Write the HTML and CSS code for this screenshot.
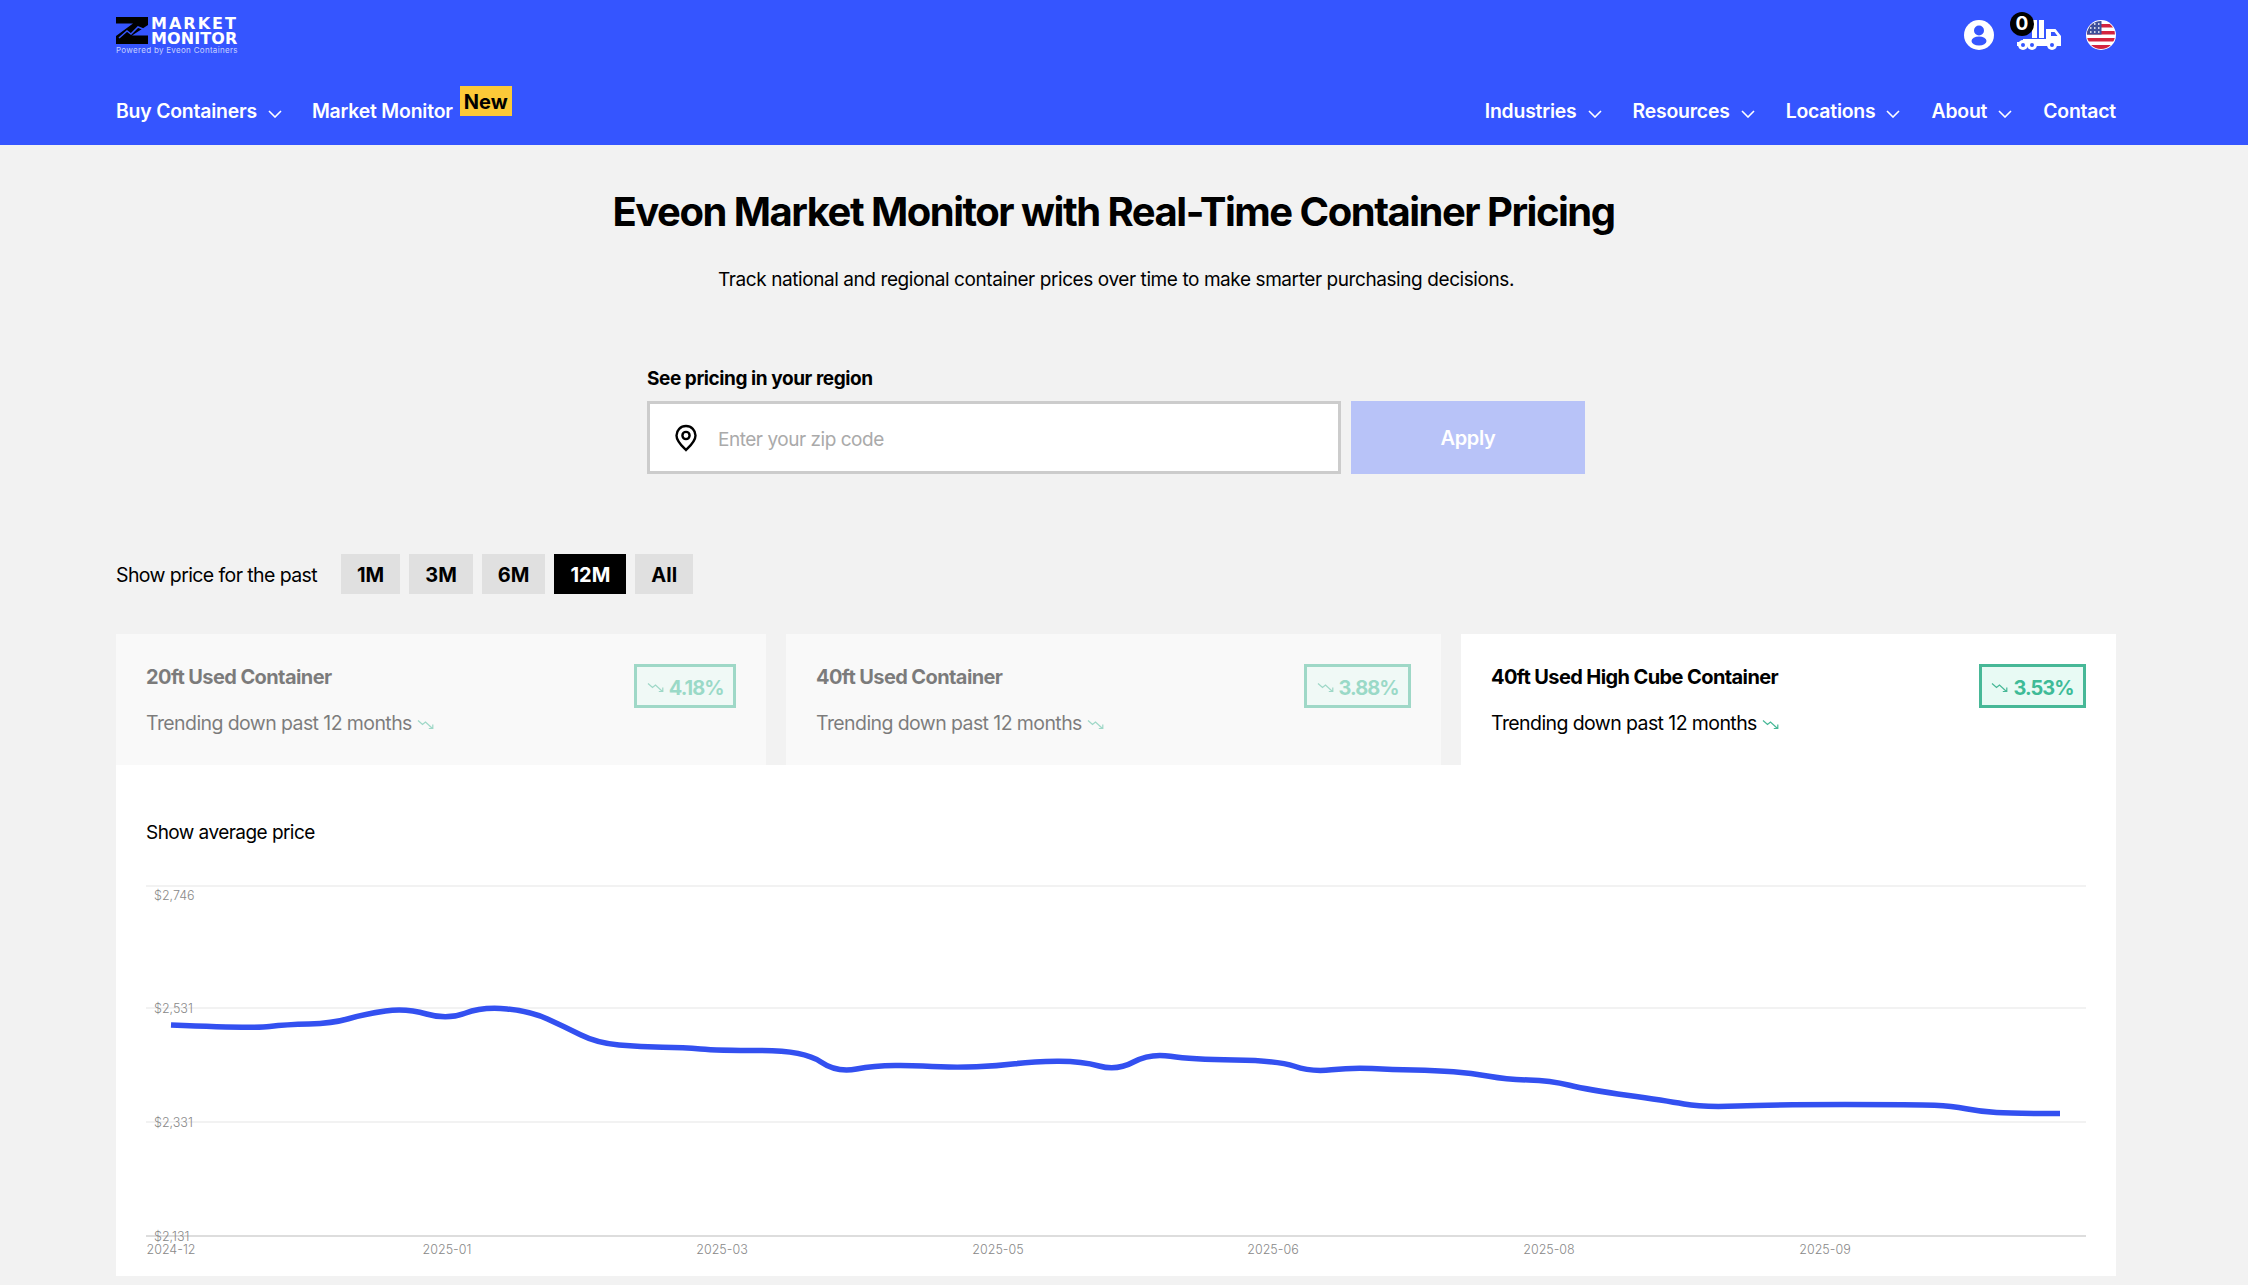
FILE: index.html
```html
<!DOCTYPE html>
<html lang="en">
<head>
  <meta charset="UTF-8">
  <meta name="viewport" content="width=device-width, initial-scale=1.0">
  <title>Eveon Market Monitor</title>
  <link rel="stylesheet" href="styles.css">
</head>
<body>
  <svg class="defs" width="0" height="0" aria-hidden="true">
    <symbol id="chevron" viewBox="0 0 14 8">
      <path d="M1 1l6 6 6-6" fill="none" stroke="currentColor" stroke-width="1.6"/>
    </symbol>
    <symbol id="trend" viewBox="0 0 18 11">
      <path d="M1 1.500l4.500 4 3-2.500 7 6.500M15.800 5.500v4h-4" fill="none" stroke="currentColor" stroke-width="1.200"/>
    </symbol>
  </svg>

  <header class="site-header">
    <div class="container">
      <div class="top-row">
        <a class="logo">
          <svg class="logo-mark" viewBox="0 0 32 27">
            <path d="M0 0H32V8L16 18.500H32V27H0V19L17 6.500H0Z" fill="#000"/>
            <path d="M3 21l8-7 4 3 7-7 5 2" fill="none" stroke="#3555ff" stroke-width="1.500"/>
          </svg>
          <span class="logo-name"><span class="logo-line-a">MARKET</span><span class="logo-line-b">MONITOR</span></span>
          <span class="logo-sub">Powered by Eveon Containers</span>
        </a>
        <div class="top-icons">
          <svg class="icon-user" viewBox="0 0 30 30">
            <circle cx="15" cy="15" r="15" fill="#fff"/>
            <circle cx="15" cy="10.500" r="5" fill="#3555ff"/>
            <ellipse cx="15" cy="21" rx="7.500" ry="4.500" fill="#3555ff"/>
          </svg>
          <div class="cart">
            <svg class="icon-truck" viewBox="0 0 44 30">
              <path d="M15 0h5v18h-5zM22 0h5v18h-5z" fill="#fff"/>
              <path d="M6 19h23V9h9.500l5.500 7v10H0v-4h6z" fill="#fff"/>
              <circle cx="6" cy="25" r="5" fill="#fff"/><circle cx="6" cy="25" r="2" fill="#3555ff"/>
              <circle cx="15" cy="25" r="5" fill="#fff"/><circle cx="15" cy="25" r="2" fill="#3555ff"/>
              <circle cx="35" cy="25" r="5" fill="#fff"/><circle cx="35" cy="25" r="2" fill="#3555ff"/>
              <path d="M34 12h3.500l3 4H34z" fill="#3555ff"/>
            </svg>
            <span class="cart-count">0</span>
          </div>
          <svg class="icon-flag" viewBox="0 0 30 30">
            <clipPath id="flag-clip"><circle cx="15" cy="15" r="14"/></clipPath>
            <circle cx="15" cy="15" r="15" fill="#fff"/>
            <g clip-path="url(#flag-clip)">
              <path d="M0 0h30v30H0z" fill="#fff"/>
              <path d="M0 4h30v3.500H0zM0 11h30v3.500H0zM0 18h30v3.500H0zM0 25h30v5H0z" fill="#d3233f"/>
              <path d="M0 0h15.500v14.500H0z" fill="#3d4f9a"/>
              <path d="M4 4h1.500M8 4h1.500M12 4h1.500M4 8h1.500M8 8h1.500M12 8h1.500M4 12h1.500M8 12h1.500M12 12h1.500" stroke="#fff" stroke-width="1.500"/>
            </g>
          </svg>
        </div>
      </div>
      <nav class="main-nav">
        <div class="nav-group">
          <a class="nav-item">Buy Containers <svg class="chevron"><use href="#chevron"/></svg></a>
          <a class="nav-item nav-market">Market Monitor</a>
          <span class="new-tag">New</span>
        </div>
        <div class="nav-group nav-right">
          <a class="nav-item">Industries <svg class="chevron"><use href="#chevron"/></svg></a>
          <a class="nav-item">Resources <svg class="chevron"><use href="#chevron"/></svg></a>
          <a class="nav-item">Locations <svg class="chevron"><use href="#chevron"/></svg></a>
          <a class="nav-item">About <svg class="chevron"><use href="#chevron"/></svg></a>
          <a class="nav-item">Contact</a>
        </div>
      </nav>
    </div>
  </header>

  <main class="container">
    <h1 class="page-title">Eveon Market Monitor with Real-Time Container Pricing</h1>
    <p class="page-sub">Track national and regional container prices over time to make smarter purchasing decisions.</p>

    <form class="region">
      <label class="region-label">See pricing in your region</label>
      <div class="region-row">
        <div class="zip-box">
          <svg class="pin" viewBox="0 0 24 28">
            <path d="M12 2C6.500 2 2.500 6.300 2.500 11.500 2.500 17.500 8.500 22.500 12 26c3.500-3.500 9.500-8.500 9.500-14.500C21.500 6.300 17.500 2 12 2z" fill="none" stroke="#000" stroke-width="2.400"/>
            <circle cx="12" cy="11.500" r="3.600" fill="none" stroke="#000" stroke-width="2.400"/>
          </svg>
          <span class="zip-placeholder">Enter your zip code</span>
        </div>
        <button class="apply" type="button">Apply</button>
      </div>
    </form>

    <div class="range">
      <span class="range-label">Show price for the past</span>
      <button class="range-btn" type="button">1M</button>
      <button class="range-btn" type="button">3M</button>
      <button class="range-btn" type="button">6M</button>
      <button class="range-btn active" type="button">12M</button>
      <button class="range-btn" type="button">All</button>
    </div>

    <div class="tabs">
      <div class="tab">
        <div class="tab-inner">
          <div>
            <div class="tab-title">20ft Used Container</div>
            <div class="tab-trend">Trending down past 12 months <svg class="trend"><use href="#trend"/></svg></div>
          </div>
          <div class="change"><svg class="trend"><use href="#trend"/></svg>4.18%</div>
        </div>
      </div>
      <div class="tab">
        <div class="tab-inner">
          <div>
            <div class="tab-title">40ft Used Container</div>
            <div class="tab-trend">Trending down past 12 months <svg class="trend"><use href="#trend"/></svg></div>
          </div>
          <div class="change"><svg class="trend"><use href="#trend"/></svg>3.88%</div>
        </div>
      </div>
      <div class="tab selected">
        <div class="tab-inner">
          <div>
            <div class="tab-title">40ft Used High Cube Container</div>
            <div class="tab-trend">Trending down past 12 months <svg class="trend"><use href="#trend"/></svg></div>
          </div>
          <div class="change"><svg class="trend"><use href="#trend"/></svg>3.53%</div>
        </div>
      </div>
    </div>

    <section class="chart-panel">
      <div class="chart-title">Show average price</div>
      <svg class="chart" viewBox="146 880 1940 380">
        <!-- grid -->
        <path d="M146 886H2086M146 1008H2086M146 1122H2086" stroke="#f2f2f2" stroke-width="2"/>
        <path d="M146 1236H2086" stroke="#ddd" stroke-width="2"/>
        <g class="y-labels">
          <text x="154" y="900">$2,746</text>
          <text x="154" y="1013">$2,531</text>
          <text x="154" y="1127">$2,331</text>
          <text x="154" y="1241">$2,131</text>
        </g>
        <g class="x-labels">
          <text x="171" y="1254">2024-12</text>
          <text x="447" y="1254">2025-01</text>
          <text x="722" y="1254">2025-03</text>
          <text x="998" y="1254">2025-05</text>
          <text x="1273" y="1254">2025-06</text>
          <text x="1549" y="1254">2025-08</text>
          <text x="1825" y="1254">2025-09</text>
        </g>
        <path class="price-line" d="M171 1025Q253 1028.500 269.500 1026.500Q286 1024.500 309 1024Q332 1023.500 348.500 1018.750Q365 1014 385.500 1011Q406 1008 426.500 1014Q447 1020 465 1013.250Q483 1006.500 507 1009Q531 1011.500 547.500 1019Q564 1026.500 580.500 1034.750Q597 1043 619 1045Q641 1047 662.500 1047.250Q684 1047.500 700.500 1049Q717 1050.500 760.500 1050.500Q804 1050.500 820.500 1061.750Q837 1073 856.500 1069Q876 1065 900.500 1065.500Q925 1066 940.500 1066.750Q956 1067.500 976.500 1066.750Q997 1066 1015 1063.750Q1033 1061.500 1057 1061.250Q1081 1061 1099 1066Q1117 1071 1133.500 1062Q1150 1053 1170.500 1056.250Q1191 1059.500 1234.500 1060Q1278 1060.500 1294.500 1066.250Q1311 1072 1331.500 1069.750Q1352 1067.500 1372 1068.500Q1392 1069.500 1414 1070Q1436 1070.500 1453.500 1071.750Q1471 1073 1489 1076.250Q1507 1079.500 1528.500 1080Q1550 1080.500 1569.500 1085.250Q1589 1090 1627 1095.250Q1665 1100.500 1684 1104Q1703 1107.500 1738 1106Q1773 1104.500 1845 1104.500Q1917 1104.500 1934.500 1105.250Q1952 1106 1966 1108.750Q1980 1111.500 1996.500 1112.500Q2013 1113.500 2060 1113.500"/>
      </svg>
    </section>
  </main>
</body>
</html>
```
FILE: styles.css
```css
body {
  font-family: Inter, "Liberation Sans", sans-serif;
  background-color: #f2f2f2;
  color: #000;
  margin: 0;
  padding: 0;
}
.defs {
  position: absolute;
}
.container {
  width: 2000px;
  margin-left: 116px;
}

/* header */
.site-header {
  background-color: #3555ff;
  height: 145px;
  color: #fff;
}
.top-row {
  display: flex;
  justify-content: space-between;
  align-items: center;
  height: 35px;
  padding-top: 17px;
}
.logo {
  align-self: flex-start;
  display: grid;
  grid-template-columns: 32px auto;
  column-gap: 3px;
  width: 122px;
}
.logo-mark {
  width: 32px;
  height: 27px;
}
.logo-name {
  font-family: "DejaVu Sans", sans-serif;
  font-weight: 700;
  font-size: 16px;
  line-height: 14.500px;
}
.logo-line-a, .logo-line-b {
  display: block;
}
.logo-line-a {
  letter-spacing: 2px;
}
.logo-line-b {
  letter-spacing: 0.100px;
}
.logo-sub {
  grid-column: 1 / 3;
  font-size: 8px;
  line-height: 9px;
  letter-spacing: 0.300px;
  color: #c6d0ff;
  white-space: nowrap;
}
.top-icons {
  display: flex;
  align-items: center;
  gap: 24px;
}
.icon-user, .icon-flag {
  width: 30px;
  height: 30px;
}
.cart {
  position: relative;
  width: 44px;
  height: 30px;
  margin: 0 1px 0 -1px;
}
.icon-truck {
  width: 44px;
  height: 30px;
}
.cart-count {
  position: absolute;
  left: -7px;
  top: -8px;
  width: 24px;
  height: 24px;
  border-radius: 50%;
  background-color: #000;
  color: #fff;
  font-size: 19px;
  font-weight: 700;
  line-height: 24px;
  text-align: center;
}
.main-nav {
  display: flex;
  justify-content: space-between;
  margin-top: 34px;
  height: 50px;
}
.nav-group {
  display: flex;
  align-items: center;
}
.nav-item {
  display: flex;
  align-items: center;
  font-size: 19.400px;
  font-weight: 600;
  letter-spacing: -0.200px;
  white-space: nowrap;
}
.chevron {
  width: 14px;
  height: 8px;
  margin: 6px 0 0 11px;
  color: #fff;
}
.nav-market {
  margin-left: 30px;
}
.new-tag {
  align-self: flex-start;
  margin-left: 7px;
  width: 52px;
  height: 30px;
  background-color: #fcc938;
  color: #000;
  font-size: 20px;
  font-weight: 700;
  line-height: 32px;
  text-align: center;
}
.nav-right {
  gap: 31px;
}

/* intro */
.page-title {
  margin: 45px 5px 0 0;
  font-size: 40px;
  font-weight: 700;
  line-height: 44px;
  letter-spacing: -1.500px;
  text-align: center;
}
.page-sub {
  margin: 31px 0 0;
  font-size: 19px;
  line-height: 30px;
  letter-spacing: -0.420px;
  text-align: center;
}

/* zip form */
.region {
  width: 938px;
  margin: 72px auto 0;
}
.region-label {
  display: block;
  font-size: 19px;
  font-weight: 700;
  line-height: 24px;
  letter-spacing: -0.430px;
}
.region-row {
  display: flex;
  gap: 10px;
  margin-top: 10px;
}
.zip-box {
  display: flex;
  align-items: center;
  box-sizing: border-box;
  width: 694px;
  height: 73px;
  padding-left: 24px;
  background-color: #fff;
  border: 3px solid #ccc;
}
.pin {
  width: 24px;
  height: 28px;
}
.zip-placeholder {
  margin-left: 20px;
  padding-top: 3px;
  font-size: 19px;
  letter-spacing: -0.470px;
  color: #aaa;
}
.apply {
  width: 234px;
  height: 73px;
  border: 0;
  background-color: #b8c3f8;
  color: #fff;
  font-family: inherit;
  font-size: 20px;
  font-weight: 600;
  letter-spacing: -0.300px;
}

/* range buttons */
.range {
  display: flex;
  align-items: center;
  gap: 9px;
  margin-top: 80px;
}
.range-label {
  width: 216px;
  padding-top: 2px;
  font-size: 19.500px;
  letter-spacing: -0.600px;
  white-space: nowrap;
}
.range-btn {
  height: 40px;
  padding: 2px 16px 0;
  border: 0;
  background-color: #e0e0e0;
  color: #000;
  font-family: inherit;
  font-size: 20px;
  font-weight: 700;
}
.range-btn.active {
  background-color: #000;
  color: #fff;
}

/* container tabs */
.tabs {
  display: grid;
  grid-template-columns: 650px 655px 655px;
  gap: 20px;
  margin-top: 40px;
}
.tab {
  background-color: #f9f9f9;
}
.tab.selected {
  background-color: #fff;
}
.tab-inner {
  display: flex;
  justify-content: space-between;
  align-items: flex-start;
  height: 131px;
  box-sizing: border-box;
  padding: 30px 30px 0;
  opacity: 0.5;
}
.selected .tab-inner {
  opacity: 1;
}
.tab-title {
  font-size: 20px;
  font-weight: 700;
  line-height: 26px;
  letter-spacing: -0.600px;
}
.tab-trend {
  margin-top: 20px;
  font-size: 19.500px;
  line-height: 26px;
  letter-spacing: -0.590px;
}
.trend {
  width: 18px;
  height: 11px;
  color: #47b897;
}
.change {
  display: flex;
  align-items: center;
  gap: 4px;
  box-sizing: border-box;
  height: 44px;
  padding: 3px 9.500px 0;
  background-color: #e8faf4;
  border: 3px solid #47b897;
  color: #3ebb97;
  font-size: 20px;
  font-weight: 700;
  letter-spacing: -1px;
}

/* chart */
.chart-panel {
  background-color: #fff;
  height: 511px;
  box-sizing: border-box;
  padding: 55px 30px 0;
}
.chart-title {
  font-size: 19px;
  line-height: 26px;
  letter-spacing: -0.550px;
}
.chart {
  display: block;
  width: 1940px;
  height: 380px;
  margin-top: 34px;
}
.chart text {
  font-size: 12.500px;
  font-weight: 300;
  fill: #888;
}
.x-labels text {
  text-anchor: middle;
}
.price-line {
  fill: none;
  stroke: #3350f0;
  stroke-width: 5.500;
}
```
